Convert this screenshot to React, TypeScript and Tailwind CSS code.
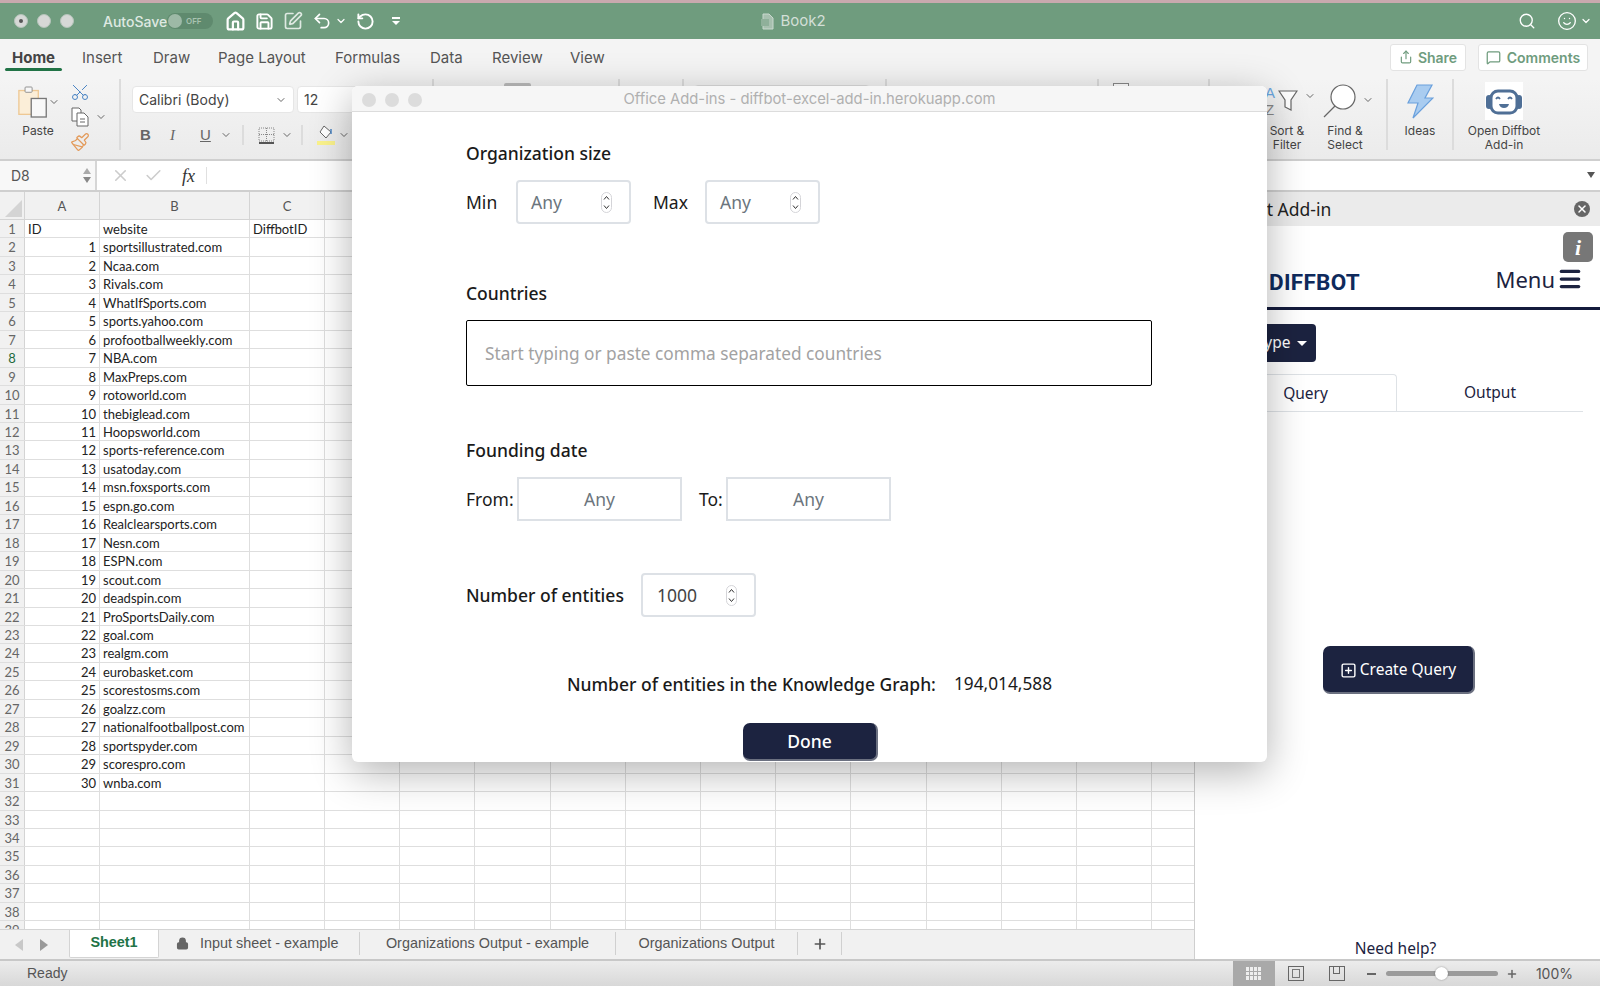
import { Check, ChevronDown, Home, Lock, Menu, MessageSquare, Paintbrush, Plus, RotateCw, Save, Scissors, Search, Share, Smile, SquarePen, SquarePlus, Undo2, X } from 'lucide-react';

const sites = [
  'sportsillustrated.com', 'Ncaa.com', 'Rivals.com', 'WhatIfSports.com', 'sports.yahoo.com', 'profootballweekly.com',
  'NBA.com', 'MaxPreps.com', 'rotoworld.com', 'thebiglead.com', 'Hoopsworld.com', 'sports-reference.com', 'usatoday.com',
  'msn.foxsports.com', 'espn.go.com', 'Realclearsports.com', 'Nesn.com', 'ESPN.com', 'scout.com', 'deadspin.com',
  'ProSportsDaily.com', 'goal.com', 'realgm.com', 'eurobasket.com', 'scorestosms.com', 'goalzz.com',
  'nationalfootballpost.com', 'sportspyder.com', 'scorespro.com', 'wnba.com',
];

const ribbonTabs = [
  { label: 'Insert', w: 'w-[71px]' },
  { label: 'Draw', w: 'w-[65px]' },
  { label: 'Page Layout', w: 'w-[117px]' },
  { label: 'Formulas', w: 'w-[95px]' },
  { label: 'Data', w: 'w-[62px]' },
  { label: 'Review', w: 'w-[78px]' },
  { label: 'View', w: 'w-[60px]' },
];

const emptyCols = Array.from({ length: 11 }, (_, i) => i);

const Chevron = ({ className = '' }: { className?: string }) => (
  <ChevronDown size={12} strokeWidth={2} className={`text-[#666] shrink-0 ${className}`} />
);

const Light = ({ dot = false }: { dot?: boolean }) => (
  <div className="w-[14px] h-[14px] rounded-full bg-[#d6d8d6] border border-[#b5c4ba] flex items-center justify-center">
    {dot && <div className="w-[4px] h-[4px] rounded-full bg-[#555]" />}
  </div>
);

const TitleBar = () => (
  <div className="h-[39px] shrink-0 bg-[#6f9c7e] border-t-[3px] border-[#c9a9ae] flex items-center pl-[14px] pr-[8px] text-[#e6eee8] relative">
    <div className="flex gap-[9px]"><Light dot /><Light /><Light /></div>
    <span className="ml-[29px] w-[64px] text-[14px] font-[Inter,sans-serif] font-medium text-[#dfe9e2]">AutoSave</span>
    <div className="w-[46px] h-[16px] rounded-full bg-[#5f8a6e] flex items-center">
      <div className="w-[14px] h-[14px] rounded-full bg-[#9db9a6] ml-px" />
      <span className="ml-[4px] text-[8px] font-semibold text-[#a9c3b1] font-[Inter,sans-serif]">OFF</span>
    </div>
    <Home size={21} strokeWidth={2.5} className="ml-[12px] text-white" />
    <Save size={19} strokeWidth={2.4} className="ml-[9px] text-white" />
    <SquarePen size={20} strokeWidth={2} className="ml-[9px] text-[#dfe9e2]" />
    <Undo2 size={20} strokeWidth={2} className="ml-[9px] text-white" />
    <ChevronDown size={12} strokeWidth={2.4} className="ml-[3px] text-white" />
    <RotateCw size={19} strokeWidth={2.4} className="ml-[9px] text-white -scale-x-100" />
    <div className="ml-[17px] flex flex-col items-center gap-[2px]">
      <div className="w-[8px] h-[1.5px] bg-white" />
      <div className="w-0 h-0 border-x-[4px] border-x-transparent border-t-[4px] border-t-white" />
    </div>
    <div className="flex-1 flex items-center justify-center gap-[5px] pr-[332px] text-[#d3dfd7]">
      <svg width="15" height="17" viewBox="0 0 15 17"><path d="M3 1h6l4 4v11H3z" fill="#a7c0af" stroke="#c9d8ce" /><rect x="1" y="6" width="8" height="7" fill="#8fb09a" /></svg>
      <span className="text-[15px] font-[Inter,sans-serif]">Book2</span>
    </div>
    <Search size={18} strokeWidth={1.8} className="mr-[2px] text-white" />
    <Smile size={20} strokeWidth={1.6} className="ml-[19px] text-white" />
    <ChevronDown size={12} strokeWidth={2.4} className="ml-[3px] text-white" />
  </div>
);

const TabsRow = () => (
  <div className="h-[40px] shrink-0 bg-[#f4f4f4] flex items-center font-[Inter,sans-serif] text-[15px] text-[#555]">
    <div className="ml-[5px] w-[57px] h-[40px] flex items-center justify-center font-bold text-[#444] relative text-[15px] pb-[2px]">
      Home
      <div className="absolute left-0 right-0 bottom-[8px] h-[3px] rounded-full bg-[#217346]" />
    </div>
    <div className="ml-[20px] flex pb-[2px]">
      {ribbonTabs.map(t => (
        <span key={t.label} className={`${t.w} whitespace-nowrap`}>{t.label}</span>
      ))}
    </div>
    <div className="flex-1" />
    <div className="-mt-[4px] w-[76px] h-[27px] bg-white border border-[#e3e3e3] rounded-[3px] flex items-center justify-center gap-[5px] text-[#6f9c7e] font-semibold text-[14px]">
      <Share size={14} />Share
    </div>
    <div className="-mt-[4px] ml-[12px] mr-[12px] w-[110px] h-[27px] bg-white border border-[#e3e3e3] rounded-[3px] flex items-center justify-center gap-[6px] text-[#6f9c7e] font-semibold text-[14px]">
      <MessageSquare size={15} />Comments
    </div>
  </div>
);

const RibbonLabel = ({ lines, className = '' }: { lines: string[]; className?: string }) => (
  <div className={`text-[12px] leading-[14px] text-[#444] text-center font-[Inter,sans-serif] whitespace-nowrap ${className}`}>
    {lines.map(l => <div key={l}>{l}</div>)}
  </div>
);

const Sep = ({ h = 'h-[71px]', className = '' }: { h?: string; className?: string }) => (
  <div className={`w-[2px] shrink-0 bg-[#dcdcdc] ${h} ${className}`} />
);

const BotLogo = () => (
  <svg width="38" height="38" viewBox="0 0 38 38" className="bg-white">
    <rect x="1" y="13" width="6" height="14" rx="3" fill="#4f6f96" />
    <rect x="31" y="13" width="6" height="14" rx="3" fill="#4f6f96" />
    <rect x="6" y="9" width="26" height="22" rx="7" fill="none" stroke="#4f6f96" strokeWidth="3" />
    <path d="M11 17q2-3 4 0M23 17q2-3 4 0" stroke="#4f6f96" strokeWidth="1.8" fill="none" />
    <path d="M14 22h10q-1 4-5 4t-5-4z" fill="#4f6f96" />
  </svg>
);

const Ribbon = () => (
  <div className="h-[82px] shrink-0 bg-gradient-to-b from-[#f4f4f4] to-[#ebebeb] border-b-2 border-[#cfcfcf] flex text-[#444] relative">
    <div className="w-[119px] shrink-0 flex">
      <div className="w-[60px] pl-[18px] pt-[5px]">
        <div className="flex items-start">
          <svg width="34" height="36" viewBox="0 0 34 36">
            <rect x="1" y="5" width="22" height="27" fill="#fbeed8" stroke="#eec894" strokeWidth="1.5" />
            <rect x="8" y="1" width="8" height="6" rx="1" fill="#f8f8f8" stroke="#888" />
            <rect x="15" y="14" width="17" height="21" fill="#f8f8f8" stroke="#777" strokeWidth="1.5" />
          </svg>
          <Chevron className="mt-[12px]" />
        </div>
        <RibbonLabel lines={['Paste']} className="mt-[4px] -ml-[18px] w-[76px]" />
      </div>
      <div className="flex flex-col items-start pl-[10px] pt-[3px] gap-[5px]">
        <Scissors size={20} strokeWidth={1.2} className="text-[#4a84c4] -rotate-90" />
        <div className="flex items-center">
          <svg width="20" height="20" viewBox="0 0 20 20" fill="white" stroke="#666" strokeWidth="1">
            <path d="M2 1h7l2 2v11H2z" />
            <path d="M7 6h7l4 4v9H7z" />
            <path d="M10 12h5M10 15h5" />
          </svg>
          <Chevron className="ml-[5px]" />
        </div>
        <Paintbrush size={20} strokeWidth={1.5} className="text-[#e39a5a]" />
      </div>
    </div>
    <Sep />
    <div className="pl-[11px] pt-[7px] shrink-0 w-[237px]">
      <div className="flex gap-[3px]">
        <div className="w-[162px] h-[27px] bg-white border border-[#e6e6e6] rounded-[4px] flex items-center justify-between px-[6px] text-[14px] font-[Inter,sans-serif]">
          Calibri (Body)<Chevron />
        </div>
        <div className="w-[61px] h-[27px] bg-white border border-[#e6e6e6] rounded-[4px] flex items-center px-[6px] text-[14px] font-[Inter,sans-serif]">12</div>
      </div>
      <div className="flex items-center mt-[10px] h-[24px] text-[15px] text-[#666] font-['Liberation_Sans',sans-serif]">
        <span className="ml-[8px] w-[30px] font-bold">B</span>
        <span className="w-[30px] italic font-['Liberation_Serif',serif]">I</span>
        <span className="w-[20px] underline">U</span>
        <Chevron />
        <Sep h="h-[20px]" className="ml-[10px]" />
        <svg width="17" height="17" viewBox="0 0 17 17" className="ml-[14px] shrink-0"><rect x="1" y="1" width="15" height="13" fill="none" stroke="#888" strokeDasharray="1 1" /><path d="M8.5 1v13M1 7.5h15" stroke="#888" strokeDasharray="1 1" /><path d="M1 16h15" stroke="#222" strokeWidth="1.5" /></svg>
        <Chevron className="ml-[6px]" />
        <Sep h="h-[20px]" className="ml-[8px]" />
        <svg width="20" height="22" viewBox="0 0 20 22" className="ml-[13px] shrink-0">
          <path d="M8 2l7 6-5 6-6-6z" fill="white" stroke="#666" />
          <path d="M15 10V5" stroke="#4a84c4" strokeWidth="1.5" />
          <rect x="1" y="17" width="18" height="4" fill="#fbf38c" />
        </svg>
        <Chevron className="ml-[2px]" />
      </div>
    </div>
    {/* pieces of the ribbon that show above the dialog */}
    <Sep className="ml-[74px]" />
    <div className="ml-[70px] mt-[4px] w-[27px] h-[20px] rounded-[2px] bg-[#bbb] shrink-0" />
    <Sep className="ml-[87px]" />
    <Sep className="ml-[62px]" />
    <div className="ml-[10px] mt-[6px] w-[176px] h-[27px] rounded-[4px] bg-white border border-[#dcdcdc] shrink-0" />
    <Sep className="ml-[15px]" />
    <Sep className="ml-[210px]" />
    <div className="ml-[14px] mt-[4px] w-[16px] h-[16px] border border-[#888] bg-white shrink-0" />
    <div className="flex-1" />
    <Sep className="mr-[12px]" />
    <div className="flex w-[333px] shrink-0">
      <div className="w-[95px] pt-[5px] flex flex-col pl-[43px]">
        <div className="flex items-start h-[36px]">
          <div className="text-[15px] leading-[17px] font-['Liberation_Sans',sans-serif] w-[13px]"><div className="text-[#6aa6e0]">A</div><div className="text-[#888]">Z</div></div>
          <svg width="20" height="22" viewBox="0 0 20 22" className="mt-[6px] shrink-0"><path d="M1 1h18l-6 9v10l-6-3V10z" fill="white" stroke="#666" strokeWidth="1.2" /></svg>
          <Chevron className="ml-[6px] mt-[6px]" />
        </div>
        <RibbonLabel lines={['Sort &', 'Filter']} className="w-[44px] mt-[4px]" />
      </div>
      <div className="w-[70px] pt-[5px] flex flex-col">
        <div className="flex items-start h-[36px] pl-[5px]">
          <svg width="34" height="35" viewBox="0 0 34 35"><circle cx="21" cy="13" r="12" fill="white" stroke="#666" strokeWidth="1.2" /><path d="M13 22L2 33" stroke="#666" strokeWidth="1.2" /></svg>
          <Chevron className="ml-[6px] mt-[10px]" />
        </div>
        <RibbonLabel lines={['Find &', 'Select']} className="w-[60px] mt-[4px] -ml-[2px]" />
      </div>
      <Sep className="-ml-[1px]" />
      <div className="w-[64px] pt-[5px] flex flex-col items-center">
        <svg width="28" height="35" viewBox="0 0 28 35"><path d="M11 1h15l-7 13h8L7 34l5-15H2z" fill="#a9ccf0" stroke="#6aa0dc" strokeWidth="1.2" /></svg>
        <RibbonLabel lines={['Ideas']} className="mt-[5px]" />
      </div>
      <Sep />
      <div className="w-[100px] pt-[3px] flex flex-col items-center">
        <BotLogo />
        <RibbonLabel lines={['Open Diffbot', 'Add-in']} className="mt-[4px]" />
      </div>
    </div>
    <div className="w-[45px] shrink-0" />
  </div>
);

const FormulaBar = () => (
  <div className="h-[31px] shrink-0 flex bg-white border-b-2 border-[#cfcfcf] text-[#555]">
    <div className="w-[97px] shrink-0 border-r-2 border-[#d6d6d6] bg-[#f8f8f8] flex items-center justify-between pl-[11px] pr-[4px]">
      <span className="text-[14px] font-[Inter,sans-serif]">D8</span>
      <div className="flex flex-col gap-[3px]">
        <div className="w-0 h-0 border-x-[4px] border-x-transparent border-b-[6px] border-b-[#aaa]" />
        <div className="w-0 h-0 border-x-[4px] border-x-transparent border-t-[6px] border-t-[#888]" />
      </div>
    </div>
    <X size={19} strokeWidth={2} className="ml-[14px] mt-[5px] text-[#ccc]" />
    <Check size={19} strokeWidth={2} className="ml-[14px] mt-[5px] text-[#ccc]" />
    <span className="ml-[19px] mt-[2px] font-['Liberation_Serif',serif] italic text-[18px] text-[#333]">fx</span>
    <div className="ml-[11px] mt-[6px] w-px h-[17px] bg-[#e0e0e0]" />
    <div className="flex-1" />
    <div className="mt-[11px] mr-[5px] w-0 h-0 border-x-[4px] border-x-transparent border-t-[6px] border-t-[#555]" />
  </div>
);

const Sheet = () => (
  <div className="w-[1195px] shrink-0 flex flex-col border-r border-[#cfcfcf] h-[767px]">
    <div className="h-[737px] overflow-hidden bg-white font-[Lato,sans-serif] text-[13px] text-[#222]">
      <div className="flex h-[28px] bg-[#f1f1f1] border-b border-[#d4d4d4] text-[#555]">
        <div className="w-[25px] flex items-end justify-end border-r border-[#d4d4d4]">
          <div className="w-0 h-0 border-l-[17px] border-l-transparent border-b-[17px] border-b-[#d4d4d4] mb-[2px] mr-[2px]" />
        </div>
        <div className="w-[75px] flex items-center justify-center border-r border-[#d4d4d4] pt-[3px]">A</div>
        <div className="w-[150px] flex items-center justify-center border-r border-[#d4d4d4] pt-[3px]">B</div>
        <div className="w-[75px] flex items-center justify-center border-r border-[#d4d4d4] pt-[3px]">C</div>
      </div>
      {Array.from({ length: 39 }, (_, i) => i).map(i => (
        <div key={i} className="flex h-[18.46px] leading-[18px] border-b border-[#dedede]">
          <div className={`w-[25px] shrink-0 bg-[#f1f1f1] border-r border-[#d4d4d4] text-center ${i === 7 ? 'text-[#1d6b3c]' : 'text-[#666]'}`}>{i + 1}</div>
          <div className="w-[75px] shrink-0 border-r border-[#dedede] px-[3px] text-right">
            {i === 0 ? <div className="text-left">ID</div> : i <= 30 ? i : ''}
          </div>
          <div className="w-[150px] shrink-0 border-r border-[#dedede] px-[3px] whitespace-nowrap overflow-hidden">
            {i === 0 ? 'website' : sites[i - 1] ?? ''}
          </div>
          <div className="w-[75px] shrink-0 border-r border-[#dedede] px-[3px]">{i === 0 ? 'DiffbotID' : ''}</div>
          {emptyCols.map(c => <div key={c} className="w-[75.2px] shrink-0 border-r border-[#dedede]" />)}
        </div>
      ))}
    </div>
    <div className="h-[30px] bg-[#f1f1f1] border-t border-[#d4d4d4] flex items-stretch font-['Liberation_Sans',sans-serif] text-[14.4px] text-[#555]">
      <div className="w-[69px] flex items-center pl-[15px] gap-[17px]">
        <div className="w-0 h-0 border-y-[6px] border-y-transparent border-r-[8px] border-r-[#c8c8c8]" />
        <div className="w-0 h-0 border-y-[6px] border-y-transparent border-l-[8px] border-l-[#999]" />
      </div>
      <div className="w-[90px] mb-[1px] pb-[2px] bg-white border-x border-b border-[#d4d4d4] rounded-b-[2px] flex items-center justify-center text-[#217346] font-bold">Sheet1</div>
      <div className="w-[201px] mt-[2px] mb-[4px] border-r border-[#d0d0d0] flex items-center pl-[17px] gap-[11px] whitespace-nowrap">
        <Lock size={13} strokeWidth={2.5} fill="#666" className="text-[#666]" />Input sheet - example
      </div>
      <div className="w-[256px] mt-[2px] mb-[4px] border-r border-[#d0d0d0] flex items-center justify-center whitespace-nowrap">Organizations Output - example</div>
      <div className="w-[182px] mt-[2px] mb-[4px] border-r border-[#d0d0d0] flex items-center justify-center whitespace-nowrap">Organizations Output</div>
      <div className="w-[44px] mt-[2px] mb-[4px] border-r border-[#d0d0d0] flex items-center justify-center">
        <Plus size={16} strokeWidth={2.5} className="text-[#555]" />
      </div>
    </div>
  </div>
);

const Pane = () => (
  <div className="flex-1 h-[767px] bg-white flex flex-col font-['Noto_Sans',sans-serif] text-[#1c2340]">
    <div className="h-[34px] bg-[#ebebeb] flex items-center justify-between pl-[21px] pr-[10px] text-[17.5px] text-[#222]">
      Diffbot Add-in
      <div className="w-[16px] h-[16px] rounded-full bg-[#666] flex items-center justify-center">
        <X size={12} strokeWidth={3} className="text-white" />
      </div>
    </div>
    <div className="flex justify-end pr-[7px] pt-[6px]">
      <div className="w-[30px] h-[30px] rounded-[5px] bg-[#777] flex items-center justify-center font-['Liberation_Serif',serif] italic font-bold text-white text-[22px]">i</div>
    </div>
    <div className="h-[48px] flex items-start justify-between pl-[74px] pr-[17px] border-b-[3px] border-[#141b3c]">
      <span className="text-[22.5px] font-bold font-[Roboto,sans-serif] text-[#0f2a5c] tracking-[0.3px] leading-[32px] mt-[4px]">DIFFBOT</span>
      <span className="flex items-center gap-[2px] text-[22px] leading-[30px] mt-[2px]">Menu<Menu size={26} strokeWidth={3} /></span>
    </div>
    <div className="mt-[14px] ml-[8px] w-[113px] h-[38px] bg-[#1c2340] rounded-[4px] flex items-center justify-center gap-[7px] text-white text-[15.5px] whitespace-nowrap">
      Select type
      <div className="w-0 h-0 border-x-[5px] border-x-transparent border-t-[5px] border-t-white" />
    </div>
    <div className="mt-[12px] ml-[8px] mr-[17px] h-[38px] flex border-b border-[#dee2e6] text-[15.5px]">
      <div className="w-[194px] border-t border-r border-[#dee2e6] rounded-tr-[4px] flex items-center justify-center pl-[12px] -mb-px">Query</div>
      <div className="flex-1 flex items-center justify-center pt-[1px]">Output</div>
    </div>
    <div className="mt-[234px] ml-[128px] w-[152px] h-[48px] pt-[2px] rounded-[7px] bg-[#1c2340] border-r-2 border-b-2 border-[#6b7080] flex items-center justify-center gap-[3px] text-white text-[15.5px]">
      <SquarePlus size={17} />Create Query
    </div>
    <div className="flex-1" />
    <div className="text-center text-[15.5px] leading-[22px] pr-[4px]">Need help?</div>
  </div>
);

const Spinner = () => (
  <svg width="11" height="21" viewBox="0 0 11 21" className="shrink-0">
    <rect x="0.5" y="0.5" width="10" height="20" rx="5" fill="white" stroke="#d4d4d8" />
    <path d="M3 7.5l2.5-3 2.5 3M3 13.5l2.5 3 2.5-3" fill="none" stroke="#333" strokeWidth="1" />
  </svg>
);

const NumberField = ({ value, placeholder = false }: { value: string; placeholder?: boolean }) => (
  <div className={`w-[115px] h-[44px] bg-white border-2 border-[#dde1e6] rounded-[4px] flex items-center justify-between pr-[17px] text-[17.5px] ${placeholder ? 'pl-[13px] text-[#6c757d]' : 'pl-[14px] text-[#444]'}`}>
    {value}<Spinner />
  </div>
);

const DateField = () => (
  <div className="w-[165px] h-[44px] border-2 border-[#dde1e6] flex items-center justify-center text-[17.5px] text-[#6c757d]">Any</div>
);

const Modal = () => (
  <div className="absolute left-[352px] top-[86px] w-[915px] h-[676px] bg-white rounded-[6px] shadow-[0_10px_40px_rgba(0,0,0,0.3)] flex flex-col font-['Noto_Sans',sans-serif] text-[17.5px] text-[#1a1a1a]">
    <div className="h-[26px] shrink-0 pt-[2px] bg-[#f6f6f6] border-b border-[#dcdcdc] rounded-t-[6px] flex items-center pl-[10px] relative">
      <div className="flex gap-[9px] w-[60px]">
        <div className="w-[14px] h-[14px] rounded-full bg-[#dcdcdc]" />
        <div className="w-[14px] h-[14px] rounded-full bg-[#dcdcdc]" />
        <div className="w-[14px] h-[14px] rounded-full bg-[#dcdcdc]" />
      </div>
      <div className="flex-1 text-center pr-[70px] text-[14.8px] text-[#b0b0b0] font-[Inter,sans-serif]">Office Add-ins - diffbot-excel-add-in.herokuapp.com</div>
    </div>
    <div className="pl-[114px] pt-[28px] flex-1 flex flex-col">
      <div className="leading-[26px] font-medium">Organization size</div>
      <div className="mt-[14px] flex items-center">
        <span className="w-[50px]">Min</span>
        <NumberField value="Any" placeholder />
        <span className="ml-[22px] w-[52px]">Max</span>
        <NumberField value="Any" placeholder />
      </div>
      <div className="mt-[56px] leading-[26px] font-medium">Countries</div>
      <div className="mt-[14px] pt-[1px] w-[686px] h-[66px] border border-black rounded-[2px] flex items-center pl-[18px] text-[#a2a2a2] text-[17.25px]">Start typing or paste comma separated countries</div>
      <div className="mt-[51px] leading-[26px] font-medium">Founding date</div>
      <div className="mt-[14px] flex items-center">
        <span className="w-[51px] whitespace-nowrap">From:</span>
        <DateField />
        <span className="ml-[17px] w-[27px]">To:</span>
        <DateField />
      </div>
      <div className="mt-[52px] flex items-center">
        <span className="w-[175px] font-medium">Number of entities</span>
        <NumberField value="1000" />
      </div>
      <div className="mt-[54px] flex items-center pl-[101px] leading-[26px]">
        <span className="w-[387px] font-medium whitespace-nowrap">Number of entities in the Knowledge Graph:</span>
        <span className="text-[17.25px]">194,014,588</span>
      </div>
      <div className="mt-[26px] ml-[277px] w-[135px] h-[38px] rounded-[7px] bg-[#1c2340] border-r-2 border-b-2 border-[#6b7080] flex items-center justify-center text-white font-medium">Done</div>
    </div>
  </div>
);

const StatusBar = () => (
  <div className="h-[27px] shrink-0 bg-gradient-to-b from-[#ececec] to-[#d8d8d8] border-t-2 border-[#c8c8c8] flex items-center text-[#555]">
    <span className="ml-[27px] text-[14px] font-['Liberation_Sans',sans-serif]">Ready</span>
    <div className="flex-1" />
    <div className="w-[42px] h-[26px] bg-[#a9a9a9] flex items-center justify-center">
      <div className="grid grid-cols-4 gap-px w-[15px] h-[13px]">
        {Array.from({ length: 12 }, (_, i) => <div key={i} className="bg-[#eee]" />)}
      </div>
    </div>
    <div className="ml-[13px] w-[16px] h-[15px] border border-[#666] flex items-center justify-center"><div className="w-[8px] h-[9px] border border-[#777]" /></div>
    <div className="ml-[25px] w-[16px] h-[15px] border border-[#666] flex justify-center"><div className="w-[7px] h-[7px] border-x border-b border-[#666]" /></div>
    <div className="ml-[22px] w-[9px] h-[2px] bg-[#666]" />
    <div className="ml-[10px] w-[112px] h-[5px] rounded-full bg-[#9b9b9b] relative">
      <div className="absolute left-[49px] -top-[4.5px] w-[13px] h-[13px] rounded-full bg-white shadow-[0_0_2px_rgba(0,0,0,0.4)]" />
    </div>
    <Plus size={12} strokeWidth={3} className="ml-[8px] text-[#666]" />
    <span className="ml-[18px] mr-[27px] text-[14px] font-[Inter,sans-serif]">100%</span>
  </div>
);

export default function App() {
  return (
    <div className="w-[1600px] h-[986px] overflow-hidden relative bg-white flex flex-col">
      <TitleBar />
      <TabsRow />
      <Ribbon />
      <FormulaBar />
      <div className="flex flex-1 min-h-0">
        <Sheet />
        <Pane />
      </div>
      <StatusBar />
      <Modal />
    </div>
  );
}
